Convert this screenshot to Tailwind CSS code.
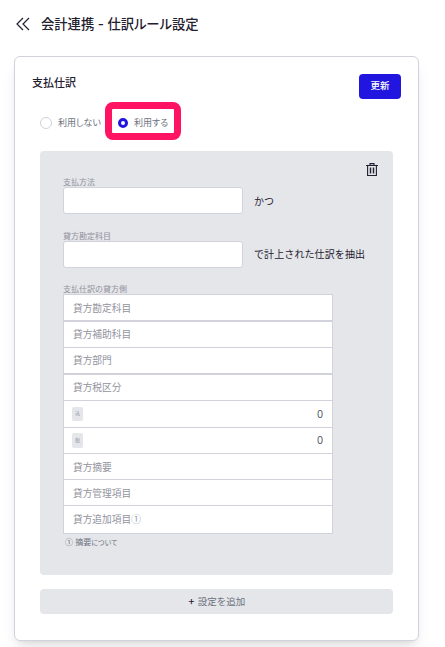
<!DOCTYPE html>
<html lang="ja">
<head>
    <meta charset="UTF-8">
    <title>会計連携 - 仕訳ルール設定</title>
    <script src="https://cdn.jsdelivr.net/npm/@tailwindcss/browser@4"></script>
</head>
<body class="bg-white font-['Inter','Noto_Sans_CJK_JP',sans-serif] text-[#1f2030]">
    <div class="w-[445px] h-[647px] overflow-hidden pt-[14px] pl-[14px]">
        <!-- Header -->
        <div class="flex items-center h-[20px] ml-[2px]">
            <svg class="w-[14px] h-[14px]" viewBox="0 0 14 14" fill="none" stroke="#1f2030" stroke-width="1.2">
                <path d="M7 1 1 7l6 6M13 1 7 7l6 6"></path>
            </svg>
            <h1 class="ml-[11px] text-[13.3px] leading-[20px] font-medium [font-feature-settings:'palt']">会計連携 - 仕訳ルール設定</h1>
        </div>

        <!-- Card -->
        <div class="mt-[22px] w-[405px] h-[585px] bg-white border border-[#d1d2dc] rounded-[6px] shadow-lg px-[25px] pt-[17px]">
            <div class="flex justify-between -ml-[8px] -mr-[8px]">
                <span class="text-[11px] leading-[18px] font-medium">支払仕訳</span>
                <button class="w-[42px] h-[25px] bg-[#2116e0] rounded-[4px] text-white text-[9.5px] font-medium">更新</button>
            </div>

            <!-- Radios -->
            <div class="flex items-center h-[38px] mt-[3px] text-[9px] text-[#6b7280] [font-feature-settings:'palt']">
                <span class="w-[12px] h-[12px] mt-[3px] rounded-full border border-[#d1d2dc] bg-white"></span>
                <span class="ml-[6px] w-[47px] mt-[3px]">利用しない</span>
                <div class="flex items-center w-[76px] h-[38px] border-[7px] border-[#ff1464] rounded-[8px] pl-[6px] pt-[3px]">
                    <span class="w-[10px] h-[10px] rounded-full border-[3px] border-[#2116e0] bg-white"></span>
                    <span class="ml-[6px]">利用する</span>
                </div>
            </div>

            <!-- Rule panel -->
            <div class="relative mt-[11px] w-[353px] h-[424px] bg-[#e5e6ea] rounded-[4px] pl-[23px] pt-[27px]">
                <svg class="absolute right-[15px] top-[12px] w-[12px] h-[13px]" viewBox="0 0 12 13" fill="none" stroke="#1f2030" stroke-width="1.1">
                    <path d="M0 2.5h12M4 2.5V.6h4v1.9M1.6 2.5v10h8.8v-10"></path>
                    <path stroke-width="1.4" d="M4.5 4.5v6M7.5 4.5v6"></path>
                </svg>

                <div class="text-[8px] leading-[9px] text-[#8f909a]">支払方法</div>
                <div class="flex items-center">
                    <div class="w-[180px] h-[27px] bg-white border border-[#d1d2dc] rounded-[3px]"></div>
                    <span class="ml-[11px] mt-[1px] text-[10px]">かつ</span>
                </div>

                <div class="mt-[18px] text-[8px] leading-[9px] text-[#8f909a]">貸方勘定科目</div>
                <div class="flex items-center">
                    <div class="w-[180px] h-[27px] bg-white border border-[#d1d2dc] rounded-[3px]"></div>
                    <span class="ml-[11px] text-[10px] tracking-[0.1px]">で計上された仕訳を抽出</span>
                </div>

                <div class="mt-[17px] text-[8px] leading-[9px] text-[#8f909a]">支払仕訳の貸方側</div>
                <div class="w-[270px] text-[9.7px] text-[#92939d] bg-white border border-[#d1d2dc]">
                    <div class="h-[27px] flex items-center px-[9px] pt-[3px] border-b-2 border-[#d1d2dc]">貸方勘定科目</div>
                    <div class="h-[26px] flex items-center px-[9px] pt-[2px] border-b border-[#d1d2dc]">貸方補助科目</div>
                    <div class="h-[27px] flex items-center px-[9px] pt-[2px] border-b-2 border-[#d1d2dc]">貸方部門</div>
                    <div class="h-[26px] flex items-center px-[9px] pt-[2px] border-b border-[#d1d2dc]">貸方税区分</div>
                    <div class="h-[27px] flex items-center justify-between px-[9px] border-b border-[#d1d2dc]">
                        <span class="-ml-[1px] w-[11px] h-[14px] flex items-center justify-center bg-[#e5e6ea] rounded-[2px] text-[5px]">込</span>
                        <span class="text-[#4b5563] mt-[2px]">0</span>
                    </div>
                    <div class="h-[26px] flex items-center justify-between px-[9px] border-b border-[#d1d2dc]">
                        <span class="-ml-[1px] w-[11px] h-[15px] flex items-center justify-center bg-[#e5e6ea] rounded-[2px] text-[5px]">税</span>
                        <span class="text-[#4b5563] mt-[2px]">0</span>
                    </div>
                    <div class="h-[26px] flex items-center px-[9px] pt-[3px] border-b border-[#d1d2dc]">貸方摘要</div>
                    <div class="h-[26px] flex items-center px-[9px] pt-[3px] border-b border-[#d1d2dc]">貸方管理項目</div>
                    <div class="h-[27px] flex items-center px-[9px]"><span>貸方追加項目<span class="font-['Noto_Sans_CJK_JP']">①</span></span></div>
                </div>
                <div class="mt-[3px] ml-[2px] text-[8px] leading-[10px] text-[#6b7280] [font-feature-settings:'palt']"><span class="font-['Noto_Sans_CJK_JP']">①</span> 摘要<span class="text-[7px]">について</span></div>
            </div>

            <!-- Add setting -->
            <button class="block mt-[14px] w-[353px] h-[25px] pt-[1px] bg-[#e5e6ea] rounded-[4px] text-[9.5px] text-[#6b7280]"><span class="text-[#1f2030] text-[11px] leading-none">+</span> 設定を追加</button>
        </div>
    </div>
</body>
</html>
